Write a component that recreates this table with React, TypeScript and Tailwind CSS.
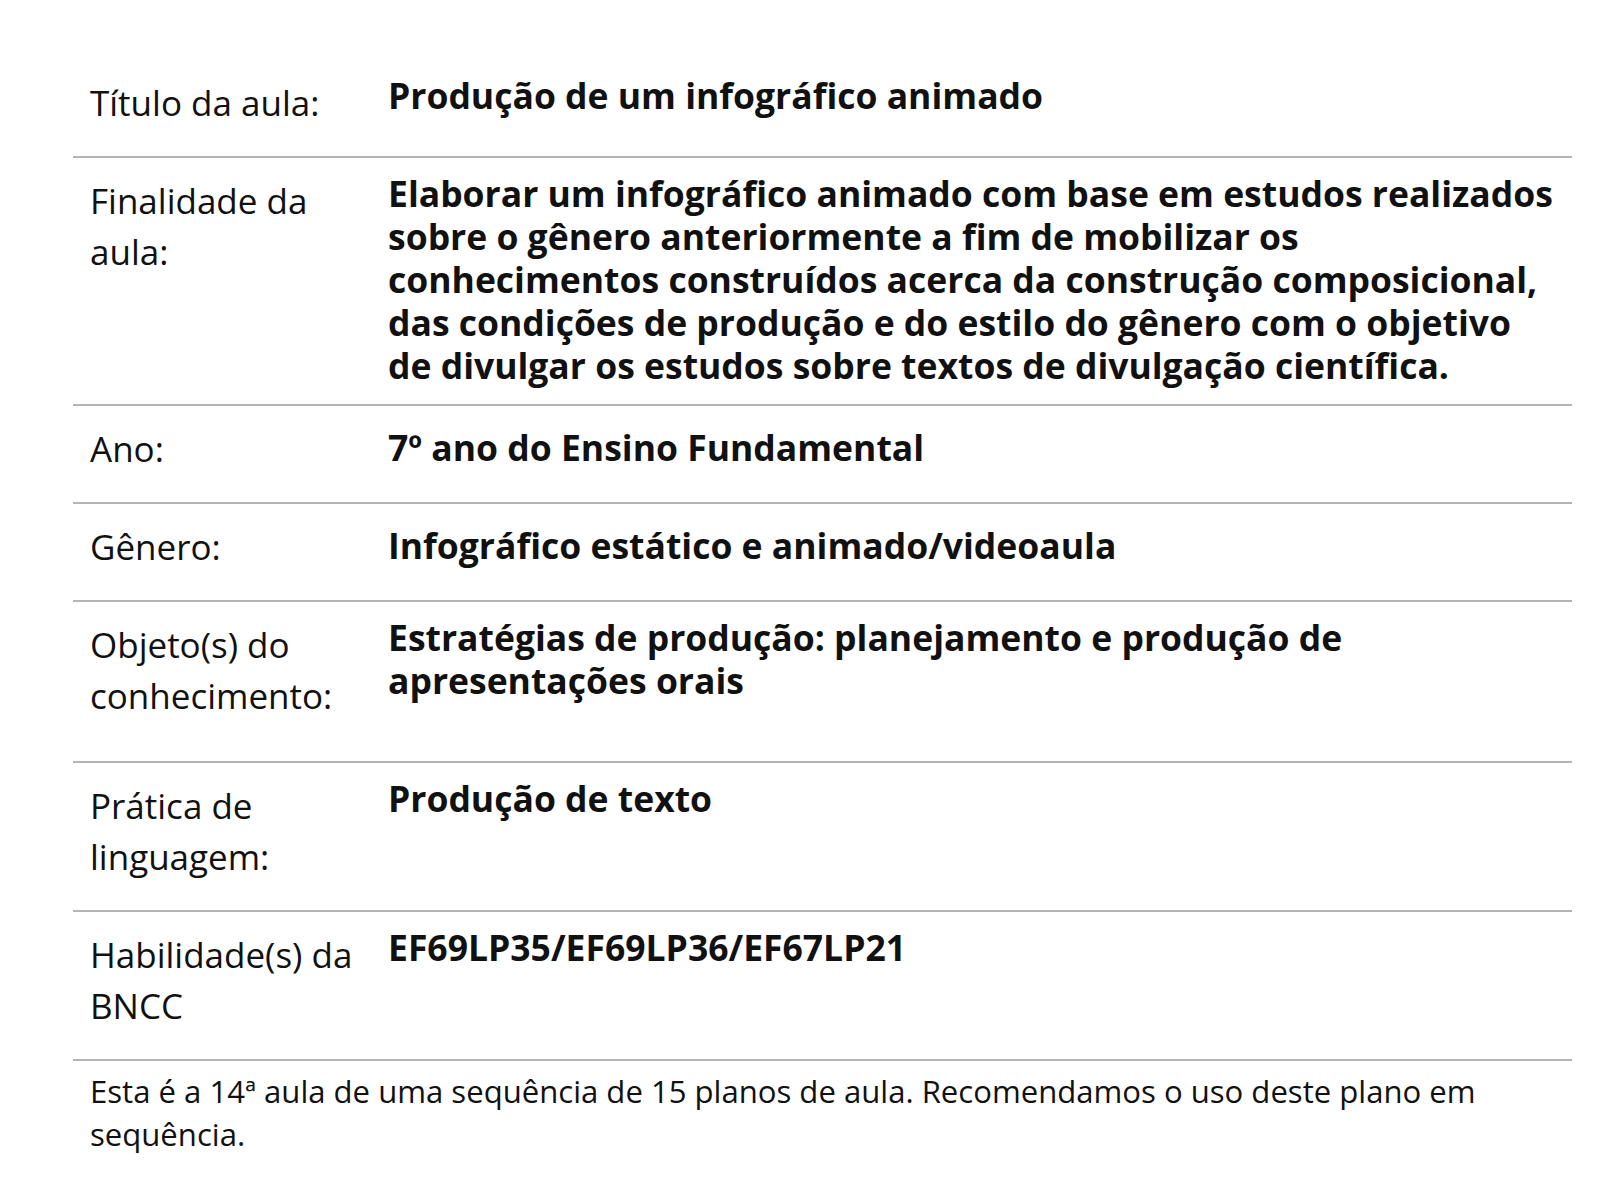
import React from "react";

type Row = {
  label: string;
  value: string;
  labelExtra?: string;
  valueOffset?: string;
};

const rows: Row[] = [
  { label: "Título da aula:", value: "Produção de um infográfico animado" },
  {
    label: "Finalidade da aula:",
    value:
      "Elaborar um infográfico animado com base em estudos realizados sobre o gênero anteriormente a fim de mobilizar os conhecimentos construídos acerca da construção composicional, das condições de produção e do estilo do gênero com o objetivo de divulgar os estudos sobre textos de divulgação científica.",
  },
  { label: "Ano:", value: "7º ano do Ensino Fundamental", valueOffset: "mt-[3px]" },
  { label: "Gênero:", value: "Infográfico estático e animado/videoaula", valueOffset: "mt-[3px]" },
  {
    label: "Objeto(s) do conhecimento:",
    value: "Estratégias de produção: planejamento e produção de apresentações orais",
    labelExtra: "mb-[23px]",
  },
  { label: "Prática de linguagem:", value: "Produção de texto" },
  { label: "Habilidade(s) da BNCC", value: "EF69LP35/EF69LP36/EF67LP21" },
];

export default function App() {
  return (
    <div
      className="min-h-[1200px] w-[1600px] bg-white text-[#111]"
      style={{ fontFamily: '"Open Sans", "Noto Sans", sans-serif' }}
    >
      <div className="ml-[73px] w-[1499px] pt-[60px]">
        {rows.map((r, i) => (
          <div key={i} className="flex border-b-2 border-[#b4b4b4] py-[17px]">
            <div className="w-[315px] shrink-0 pl-[17px]">
              <p
                className={`w-[285px] text-[35px] leading-[51px] font-normal ${
                  r.labelExtra ?? "mb-[11px]"
                }`}
              >
                {r.label}
              </p>
            </div>
            <div className="min-w-0 flex-1 pr-[12px]">
              <p
                className={`text-[35.5px] leading-[43px] font-bold ${
                  r.valueOffset ?? "-mt-[3px]"
                }`}
              >
                {r.value}
              </p>
            </div>
          </div>
        ))}
        <div className="pl-[17px] pr-[30px] pt-[9px]">
          <p className="text-[31.1px] leading-[43px]">
            Esta é a 14ª aula de uma sequência de 15 planos de aula. Recomendamos o uso deste
            plano em sequência.
          </p>
        </div>
      </div>
    </div>
  );
}
